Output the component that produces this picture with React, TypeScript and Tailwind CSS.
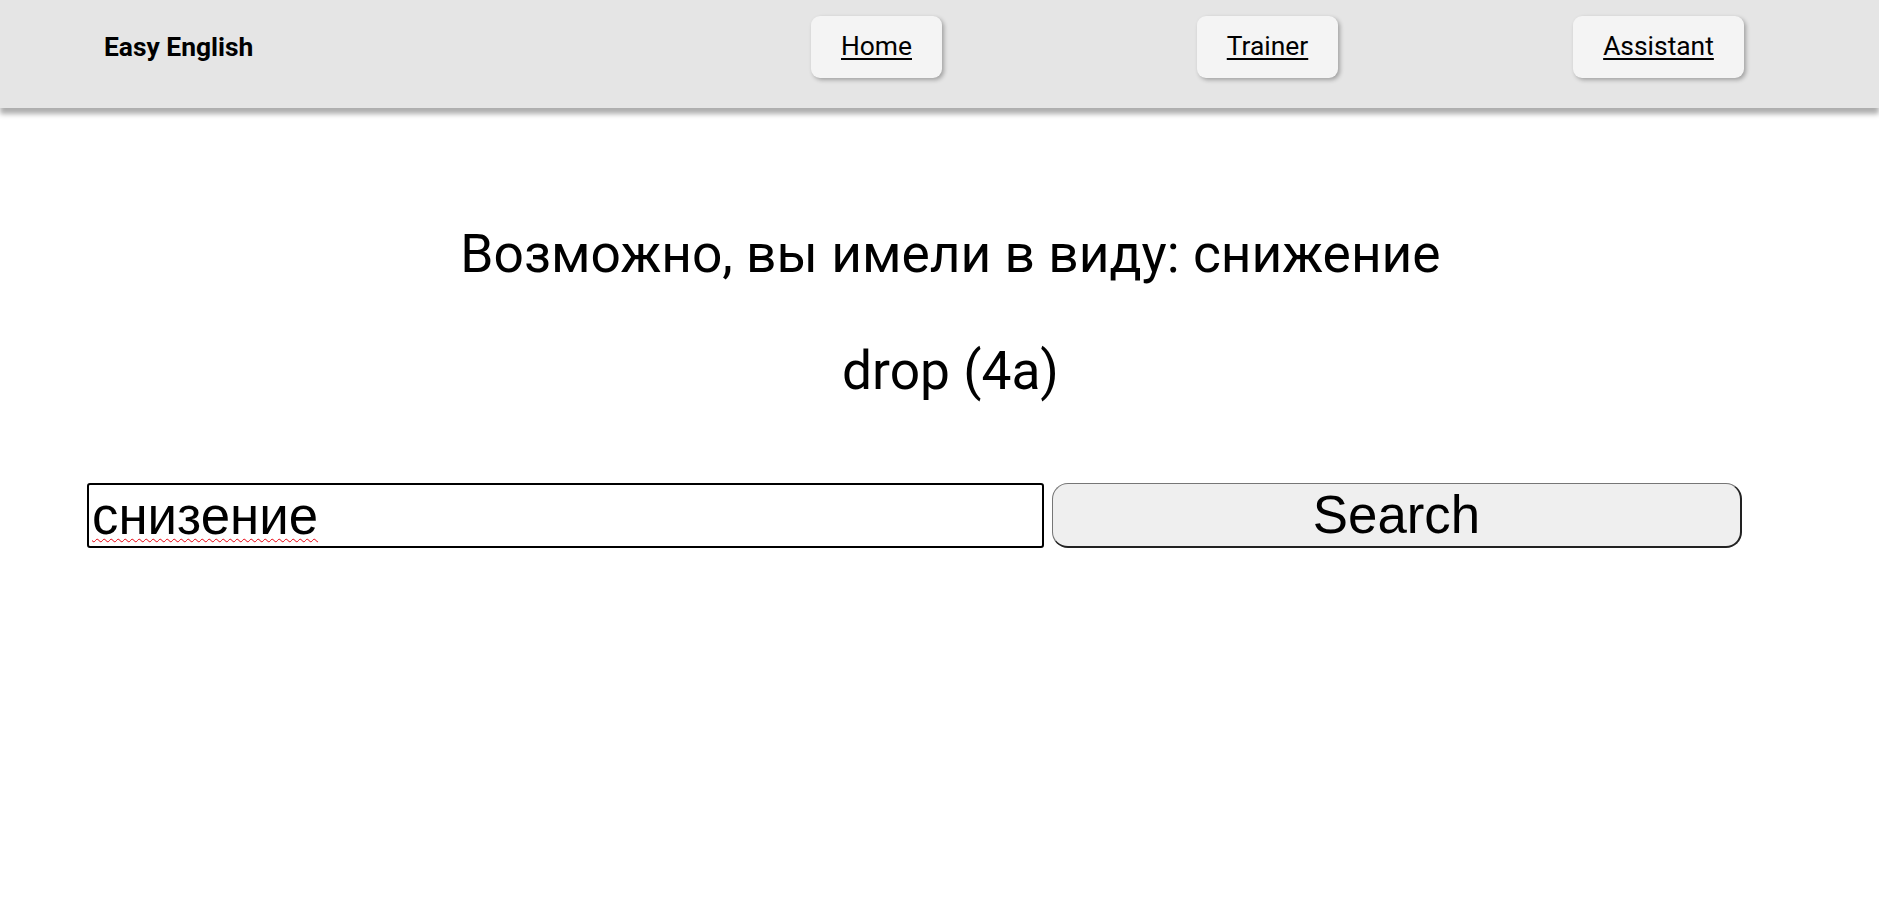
import { useState } from 'react';

const NAV = ['Home', 'Trainer', 'Assistant'];

export default function App() {
  const [query, setQuery] = useState('снизение');

  return (
    <div className="min-h-screen bg-white text-black font-['Roboto',sans-serif]">
      <header className="h-[108px] bg-[#e5e5e5] shadow-[0_6px_5px_rgba(0,0,0,0.32)] flex items-start pt-[16px]">
        <div className="pl-[104px] text-[26.4px] leading-[62px] font-bold">Easy English</div>
        <nav className="ml-auto mr-[25px] w-[1173px] grid grid-cols-3">
          {NAV.map((item) => (
            <div key={item} className="flex justify-center">
              <a
                href="#"
                className="h-[62px] px-[30px] flex items-center rounded-[9px] bg-[#f4f4f4] shadow-[2px_2px_4px_rgba(0,0,0,0.3)] text-[26.4px] underline underline-offset-[3px]"
              >
                {item}
              </a>
            </div>
          ))}
        </nav>
      </header>

      <main className="flex flex-col pt-[115px]">
        <div className="flex flex-col items-center pl-[22px]">
          <h2 className="text-[53.3px] leading-[62px] font-normal">Возможно, вы имели в виду: снижение</h2>
          <p className="mt-[55px] text-[53.3px] leading-[62px]">drop (4a)</p>
        </div>

        <form
          className="mt-[81px] ml-[87px] flex gap-[8px] font-['Liberation_Sans',Arial,sans-serif]"
          onSubmit={(e) => e.preventDefault()}
        >
          <input
            value={query}
            onChange={(e) => setQuery(e.target.value)}
            className="w-[957px] h-[65px] border-2 border-black rounded-[3px] px-[3px] text-[52.8px] leading-none outline-none underline decoration-wavy decoration-red-600 decoration-1 underline-offset-[4px]"
          />
          <button
            type="submit"
            className="w-[690px] h-[65px] border border-[#767676] border-b-2 border-b-[#222] border-r-2 border-r-[#222] rounded-[16px] bg-[#efefef] text-[52.8px] leading-none"
          >
            Search
          </button>
        </form>
      </main>
    </div>
  );
}
